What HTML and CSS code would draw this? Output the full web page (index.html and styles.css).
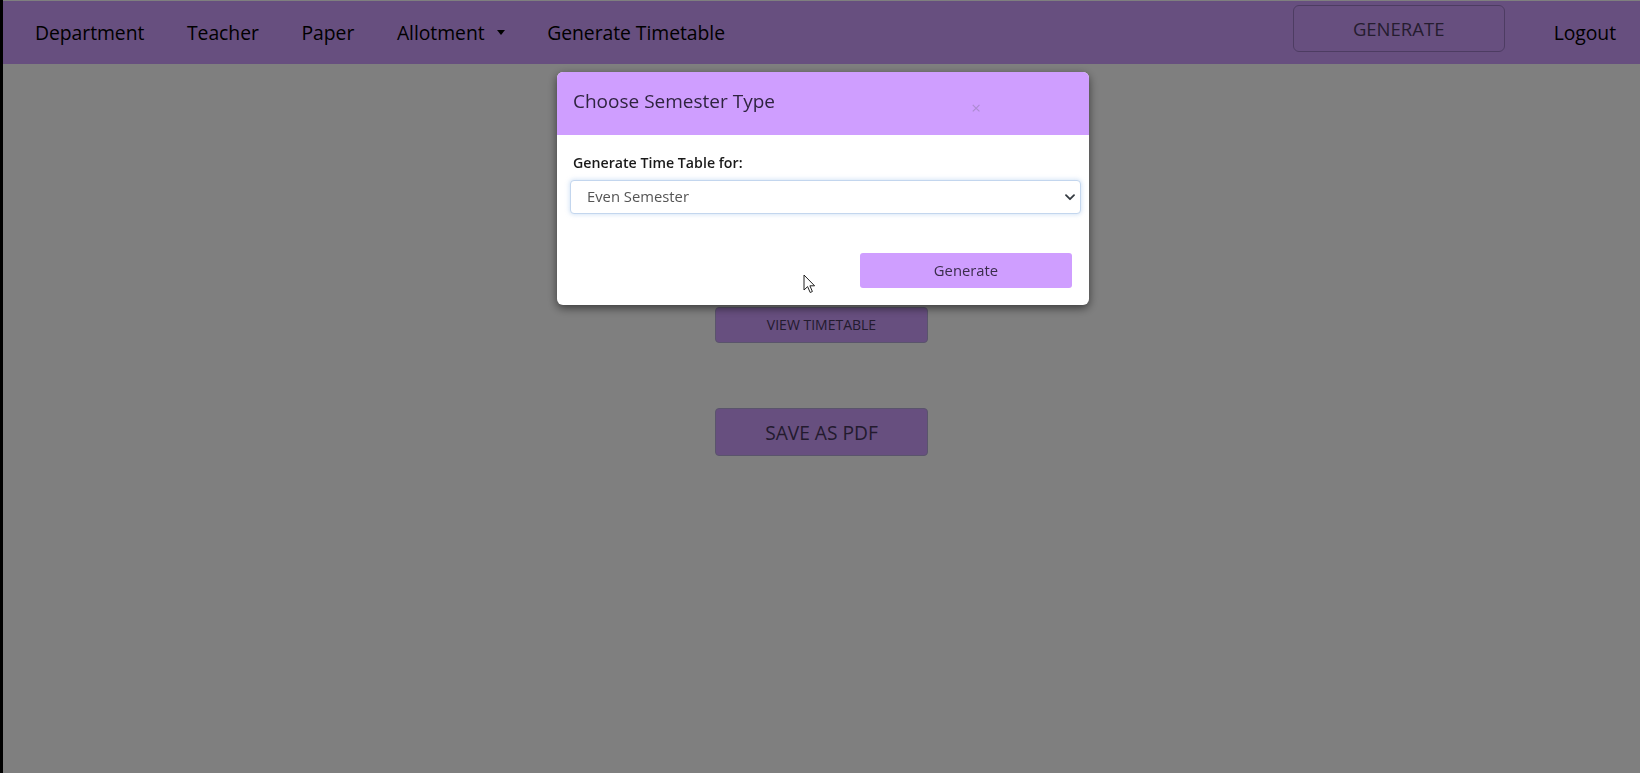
FILE: index.html
```html
<!DOCTYPE html>
<html lang="en">
<head>
<meta charset="utf-8">
<title>Timetable</title>
<link rel="stylesheet" href="styles.css">
</head>
<body>
<div class="page">
  <nav class="navbar">
    <ul class="nav-links">
      <li><a href="#">Department</a></li>
      <li><a href="#">Teacher</a></li>
      <li><a href="#">Paper</a></li>
      <li><a href="#" class="dropdown">Allotment <span class="caret"></span></a></li>
      <li><a href="#">Generate Timetable</a></li>
    </ul>
    <button class="nav-generate">GENERATE</button>
    <a href="#" class="logout">Logout</a>
  </nav>
  <main class="content">
    <button class="btn btn-view">VIEW TIMETABLE</button>
    <button class="btn btn-pdf">SAVE AS PDF</button>
  </main>
</div>

<div class="backdrop"></div>
<div class="modal-wrap">
  <div class="modal">
    <div class="modal-header">
      <h5 class="modal-title">Choose Semester Type</h5>
      <span class="close">&times;</span>
    </div>
    <div class="modal-body">
      <label class="label" for="sem">Generate Time Table for:</label>
      <div class="select-wrap">
        <select id="sem" class="select">
          <option>Even Semester</option>
          <option>Odd Semester</option>
        </select>
        <svg class="chev" width="10" height="7" viewBox="0 0 10 7"><path d="M1 1.2 L5 5.2 L9 1.2" fill="none" stroke="#343a40" stroke-width="1.8" stroke-linecap="round" stroke-linejoin="round"/></svg>
      </div>
    </div>
    <div class="modal-footer">
      <button class="btn-generate">Generate</button>
    </div>
    <svg class="cursor" width="13" height="20" viewBox="0 0 13 20"><path d="M1 1 L1 16 L4.6 12.6 L7.2 18.5 L9.4 17.5 L6.9 11.8 L11.6 11.8 Z" fill="#fff" stroke="#222" stroke-width="1" stroke-linejoin="round"/></svg>
  </div>
</div>
</body>
</html>
```

FILE: styles.css
```css
* { box-sizing: border-box; }

html, body {
  margin: 0;
  padding: 0;
  height: 100%;
}

body {
  font-family: "Open Sans", "Liberation Sans", sans-serif;
  background: #fff;
  border-left: 3px solid #000;
  overflow: hidden;
}

.page {
  padding-top: 1px;
  min-height: 100%;
}

.navbar {
  height: 63px;
  background: #cf9eff;
  display: flex;
  align-items: center;
  padding: 0 24px 0 32px;
}

.nav-links {
  list-style: none;
  margin: 0;
  padding: 0;
  display: flex;
  gap: 42.7px;
}

.nav-links a,
.logout {
  color: #000;
  text-decoration: none;
  font-size: 19.35px;
  letter-spacing: -0.05px;
}

.dropdown {
  display: inline-flex;
  align-items: center;
}

.caret {
  display: inline-block;
  margin-left: 12px;
  width: 0;
  height: 0;
  border-left: 4px solid transparent;
  border-right: 4px solid transparent;
  border-top: 5px solid #000;
}

.nav-generate {
  margin-left: auto;
  align-self: flex-start;
  margin-top: 4px;
  width: 212px;
  height: 47px;
  background: #cf9eff;
  border: 1px solid #9a78c4;
  border-radius: 6px;
  font-family: inherit;
  font-size: 18.5px;
  color: #4a3a5e;
  padding: 0;
}

.logout {
  margin-left: 49px;
}

.content {
  display: flex;
  flex-direction: column;
  align-items: center;
  padding-top: 243px;
}

.btn {
  width: 213px;
  background: #cf9eff;
  border: 1px solid #b4a8d8;
  border-radius: 4px;
  font-family: inherit;
  color: #46365c;
}

.btn-view {
  height: 36px;
  font-size: 14px;
  padding: 0 0 2px;
}

.btn-pdf {
  margin-top: 65px;
  height: 48px;
  font-size: 19.2px;
}

.backdrop {
  position: fixed;
  inset: 0;
  background: rgba(0, 0, 0, 0.5);
}

.modal-wrap {
  position: fixed;
  inset: 0;
  display: flex;
  justify-content: center;
  align-items: flex-start;
  padding: 72px 0 0 6px;
}

.modal {
  position: relative;
  width: 532px;
  background: #fff;
  border-radius: 6px;
  box-shadow: 0 3px 10px rgba(0, 0, 0, 0.55);
}

.modal-header {
  height: 63px;
  background: #cf9eff;
  border-radius: 6px 6px 0 0;
  display: flex;
  align-items: center;
  padding: 0 16px;
}

.modal-title {
  margin: 0;
  font-size: 19px;
  font-weight: 400;
  color: #2f2440;
  padding-bottom: 6px;
}

.close {
  margin-left: auto;
  margin-right: 92px;
  margin-top: 8px;
  font-size: 17px;
  line-height: 1;
  color: #ad8bd2;
}

.modal-body {
  padding: 18px 8px 0 13px;
}

.label {
  display: block;
  font-size: 14.2px;
  font-weight: 600;
  line-height: 20px;
  color: #1a1a1a;
  padding-left: 3px;
}

.select-wrap {
  position: relative;
  margin-top: 7px;
  width: 511px;
}

.select {
  appearance: none;
  -webkit-appearance: none;
  width: 100%;
  height: 34px;
  border: 1px solid #c3d6ee;
  border-radius: 4px;
  box-shadow: 0 0 4px 1px rgba(140, 180, 230, 0.35);
  background: #fff;
  font-family: inherit;
  font-size: 14.8px;
  color: #555;
  padding: 0 0 2px 16px;
  outline: none;
}

.chev {
  position: absolute;
  right: 6px;
  top: 14px;
  pointer-events: none;
}

.modal-footer {
  display: flex;
  justify-content: flex-end;
  padding: 39px 17px 17px;
}

.btn-generate {
  width: 212px;
  height: 35px;
  background: #cf9eff;
  border: none;
  border-radius: 3px;
  font-family: inherit;
  font-size: 14.8px;
  color: #3b2d4c;
  padding: 0 0 2px;
}

.cursor {
  position: absolute;
  left: 246px;
  top: 202px;
}
```
